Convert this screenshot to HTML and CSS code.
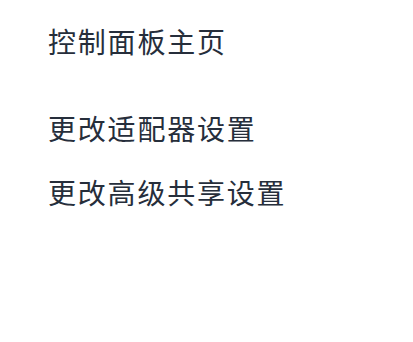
FILE: index.html
```html
<!DOCTYPE html>
<html lang="zh-CN">
<head>
<meta charset="utf-8">
<title>控制面板</title>
<link rel="stylesheet" href="styles.css">
</head>
<body>
<nav class="sidebar">
  <a class="link home" href="#">控制面板主页</a>
  <div class="group">
    <a class="link" href="#">更改适配器设置</a>
    <a class="link" href="#">更改高级共享设置</a>
  </div>
</nav>
</body>
</html>
```

FILE: styles.css
```css
html, body {
  margin: 0;
  padding: 0;
  background: #ffffff;
}
body {
  width: 413px;
  height: 342px;
  overflow: hidden;
  font-family: "Noto Sans CJK SC", "Noto Sans", sans-serif;
}
.sidebar {
  display: flex;
  flex-direction: column;
  align-items: flex-start;
  padding: 24px 0 0 48px;
}
.link {
  display: block;
  font-size: 28px;
  font-weight: 400;
  line-height: 34px;
  letter-spacing: 1.8px;
  color: #262e3b;
  text-decoration: none;
  white-space: nowrap;
}
.home {
  margin-bottom: 53px;
}
.group {
  display: flex;
  flex-direction: column;
  gap: 30px;
}
```
